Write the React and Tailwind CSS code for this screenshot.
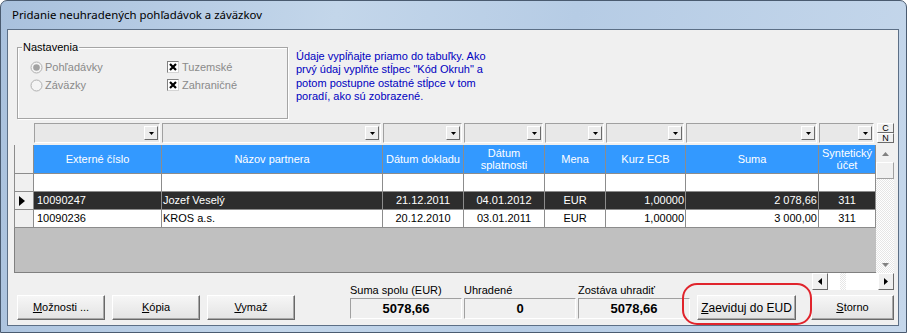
import React from 'react'

const COLS = [
  { key: 'ext', w: 'w-[128px]', cell: 'justify-start pl-[3px]', title: ['Externé číslo'] },
  { key: 'name', w: 'w-[221px]', cell: 'justify-start pl-[1px]', title: ['Názov partnera'] },
  { key: 'dd', w: 'w-[81px]', cell: 'justify-center', title: ['Dátum dokladu'] },
  { key: 'ds', w: 'w-[81px]', cell: 'justify-center', title: ['Dátum', 'splatnosti'] },
  { key: 'mena', w: 'w-[61px]', cell: 'justify-center', title: ['Mena'] },
  { key: 'kurz', w: 'w-[80px]', cell: 'justify-end pr-[1px]', title: ['Kurz ECB'] },
  { key: 'suma', w: 'w-[133px]', cell: 'justify-end pr-[1px]', title: ['Suma'] },
  { key: 'ucet', w: 'w-[57px]', cell: 'justify-center', title: ['Syntetický', 'účet'] },
]

const ROWS = [
  {},
  { sel: true, ext: '10090247', name: 'Jozef Veselý', dd: '21.12.2011', ds: '04.01.2012', mena: 'EUR', kurz: '1,00000', suma: '2 078,66', ucet: '311' },
  { ext: '10090236', name: 'KROS a.s.', dd: '20.12.2010', ds: '03.01.2011', mena: 'EUR', kurz: '1,00000', suma: '3 000,00', ucet: '311' },
]

const DITHER = 'bg-[image:repeating-conic-gradient(#e6e6e6_0%_25%,#ffffff_0%_50%)] bg-[length:2px_2px]'

function Radio({ checked }) {
  return (
    <svg width="13" height="13" viewBox="0 0 13 13" className="shrink-0">
      <circle cx="6.5" cy="6.5" r="5.5" fill="#f4f4f4" stroke="#b0b0b0" />
      {checked && <circle cx="6.5" cy="6.5" r="3.3" fill="#a2a2a2" />}
    </svg>
  )
}

function Check() {
  return (
    <span className="w-[12px] h-[12px] shrink-0 border border-[#808080] border-r-[#d4d4d4] border-b-[#d4d4d4] bg-white flex items-center justify-center">
      <svg width="8" height="8" viewBox="0 0 8 8">
        <path d="M1 1L7 7M7 1L1 7" stroke="#000" strokeWidth="2.2" />
      </svg>
    </span>
  )
}

function DropBtn() {
  return (
    <span className="w-[14px] h-[14px] flex items-center justify-center border border-t-white border-l-white border-r-[#6b6b6b] border-b-[#6b6b6b] bg-[#ececec]">
      <svg width="5" height="3" viewBox="0 0 5 3"><path d="M0 0h5L2.5 3z" fill="#000" /></svg>
    </span>
  )
}

function Combo({ w }) {
  return (
    <div className={`${w} shrink-0 h-full pr-[2px]`}>
      <div className="h-full border border-[#a0a0a0] border-b-white border-r-white bg-[#e8e8e8] flex items-center justify-end pr-[1px]">
        <DropBtn />
      </div>
    </div>
  )
}

function Btn({ children, className = '' }) {
  return (
    <div className={`h-[25px] shrink-0 flex items-center justify-center border border-t-white border-l-white border-r-[#696969] border-b-[#696969] bg-[linear-gradient(#f6f6f6,#e3e3e3)] shadow-[inset_-1px_-1px_0_#a8a8a8] ${className}`}>
      {children}
    </div>
  )
}

function Total({ label, value }) {
  return (
    <div className="w-[112px] shrink-0 flex flex-col">
      <span className="leading-[12px] mb-[2px]">{label}</span>
      <div className="h-[21px] border border-[#a0a0a0] border-r-white border-b-white flex items-center justify-center font-bold text-[13px]">
        {value}
      </div>
    </div>
  )
}

export default function App() {
  return (
    <div className="w-[907px] h-[333px] bg-white font-['Liberation_Sans',Arial,sans-serif] text-[11px] text-black">
      <div className="w-full h-full flex flex-col rounded-t-[7px] border border-[#4a5b70] bg-[linear-gradient(100deg,#a9c1dd_0%,#c3d6ea_35%,#b6cce5_60%,#c5d7eb_100%)] pl-[6px] pr-[7px] pb-[6px]">

        {/* title */}
        <div className="h-[28px] shrink-0 flex items-center pl-[5px] font-['Noto_Sans',sans-serif] text-[11.4px]">
          Pridanie neuhradených pohľadávok a záväzkov
        </div>

        <div className="flex-1 border border-[#5c6f86] bg-[#f0f0f0] flex flex-col">

          {/* settings + hint */}
          <div className="h-[93px] shrink-0 flex">
            <div className="relative ml-[9px] mt-[17px] w-[271px] h-[72px] border border-[#a5a5a5] shadow-[inset_1px_1px_0_#fff,1px_1px_0_#fff]">
              <span className="absolute -top-[7px] left-[4px] px-[1px] bg-[#f0f0f0] leading-[13px]">Nastavenia</span>
              <div className="grid grid-cols-[137px_1fr] pt-[10px] pl-[12px] text-[#8a8a8a]">
                <div className="h-[18px] flex items-center gap-[2px]"><Radio checked /><span>Pohľadávky</span></div>
                <div className="h-[18px] flex items-center gap-[3px]"><Check /><span>Tuzemské</span></div>
                <div className="h-[18px] flex items-center gap-[2px]"><Radio /><span>Záväzky</span></div>
                <div className="h-[18px] flex items-center gap-[3px]"><Check /><span>Zahraničné</span></div>
              </div>
            </div>
            <p className="ml-[8px] mt-[20px] text-[#0000c0] leading-[13.3px]">
              Údaje vypĺňajte priamo do tabuľky. Ako<br />
              prvý údaj vyplňte stĺpec &quot;Kód Okruh&quot; a<br />
              potom postupne ostatné stĺpce v tom<br />
              poradí, ako sú zobrazené.
            </p>
          </div>

          {/* filter row */}
          <div className="h-[20px] shrink-0 flex ml-[6px]">
            <div className="w-[20px] shrink-0" />
            {COLS.map(c => <Combo key={c.key} w={c.w} />)}
            <div className="w-[17px] ml-[1px] flex flex-col text-[9px] leading-none">
              <span className="h-[10px] flex items-center justify-center border border-t-white border-l-white border-r-[#6b6b6b] border-b-[#6b6b6b]">C</span>
              <span className="h-[10px] flex items-center justify-center border border-t-white border-l-white border-r-[#6b6b6b] border-b-[#6b6b6b]">N</span>
            </div>
          </div>

          {/* grid */}
          <div className="mt-[2px] h-[128px] shrink-0 flex ml-[6px]">
            <div className="w-[862px] flex flex-col">
              <div className="h-[29px] shrink-0 flex border-b border-[#8c8c8c]">
                <div className="w-[20px] shrink-0 border-l border-r border-[#8c8c8c] bg-[#f0f0f0]" />
                {COLS.map(c => (
                  <div key={c.key} className={`${c.w} shrink-0 border-r border-[#8c8c8c] bg-[#3399ff] text-white flex flex-col items-center justify-center leading-[12px] text-center`}>
                    {c.title.map(t => <span key={t}>{t}</span>)}
                  </div>
                ))}
              </div>
              {ROWS.map((r, i) => (
                <div key={i} className={`h-[18px] shrink-0 flex border-b border-[#8c8c8c] ${r.sel ? 'bg-[#2d2d2d] text-white' : 'bg-white'}`}>
                  <div className="w-[20px] shrink-0 border-l border-r border-[#8c8c8c] bg-[#f0f0f0] flex items-center pl-[4px]">
                    {r.sel && <svg width="6" height="10" viewBox="0 0 6 10"><path d="M0 0L6 5L0 10z" fill="#000" /></svg>}
                  </div>
                  {COLS.map(c => (
                    <div key={c.key} className={`${c.w} shrink-0 border-r border-[#8c8c8c] flex items-center whitespace-nowrap ${c.cell}`}>
                      {r[c.key]}
                    </div>
                  ))}
                </div>
              ))}
              <div className="flex-1 bg-[#c0c0c0] border-l border-b border-[#808080]" />
            </div>

            {/* vertical scrollbar */}
            <div className={`w-[18px] shrink-0 flex flex-col ${DITHER}`}>
              <div className="h-[17px] bg-[#f0f0f0] flex items-center justify-center">
                <svg width="7" height="4" viewBox="0 0 7 4"><path d="M0 4L3.5 0L7 4z" fill="#808080" /></svg>
              </div>
              <div className="h-[17px] bg-[#f0f0f0] border border-t-white border-l-white border-r-[#a0a0a0] border-b-[#a0a0a0]" />
              <div className="flex-1" />
              <div className="h-[17px] flex items-center justify-center">
                <svg width="7" height="4" viewBox="0 0 7 4"><path d="M0 0L3.5 4L7 0z" fill="#808080" /></svg>
              </div>
            </div>
          </div>

          {/* bottom */}
          <div className="flex-1 flex items-end pb-[5px]">
            <div className="ml-[9px] flex gap-[7px]">
              <Btn className="w-[88px]"><span><u>M</u>ožnosti ...</span></Btn>
              <Btn className="w-[88px]"><span><u>K</u>ópia</span></Btn>
              <Btn className="w-[88px]"><span><u>V</u>ymaž</span></Btn>
            </div>

            <div className="ml-[55px] mb-[1px] flex gap-[2px]">
              <Total label="Suma spolu (EUR)" value="5078,66" />
              <Total label="Uhradené" value="0" />
              <Total label="Zostáva uhradiť" value="5078,66" />
            </div>

            <div className="relative ml-[7px]">
              <Btn className="w-[99px] text-[12px]"><span><u>Z</u>aeviduj do EUD</span></Btn>
              <span className="absolute -left-[15px] -right-[16px] -top-[12px] -bottom-[5px] rounded-[15px] border-2 border-[#e0242c] pointer-events-none" />
            </div>

            <div className="ml-[15px] w-[83px] h-[47px] flex flex-col justify-between">
              <div className="h-[17px] flex ml-[1px]">
                <span className="w-[16px] h-full flex items-center justify-center border border-t-white border-l-white border-r-[#6b6b6b] border-b-[#6b6b6b] bg-[#f0f0f0]">
                  <svg width="4" height="7" viewBox="0 0 4 7"><path d="M4 0L0 3.5L4 7z" fill="#000" /></svg>
                </span>
                <div className="flex-1 bg-white flex items-center pl-[12px]">
                  <span className={`w-[6px] h-full ${DITHER}`} />
                </div>
                <span className="w-[16px] h-full flex items-center justify-center border border-t-white border-l-white border-r-[#6b6b6b] border-b-[#6b6b6b] bg-[#f0f0f0]">
                  <svg width="4" height="7" viewBox="0 0 4 7"><path d="M0 0L4 3.5L0 7z" fill="#000" /></svg>
                </span>
              </div>
              <Btn className="w-[83px]"><span><u>S</u>torno</span></Btn>
            </div>
          </div>

        </div>
      </div>
    </div>
  )
}
